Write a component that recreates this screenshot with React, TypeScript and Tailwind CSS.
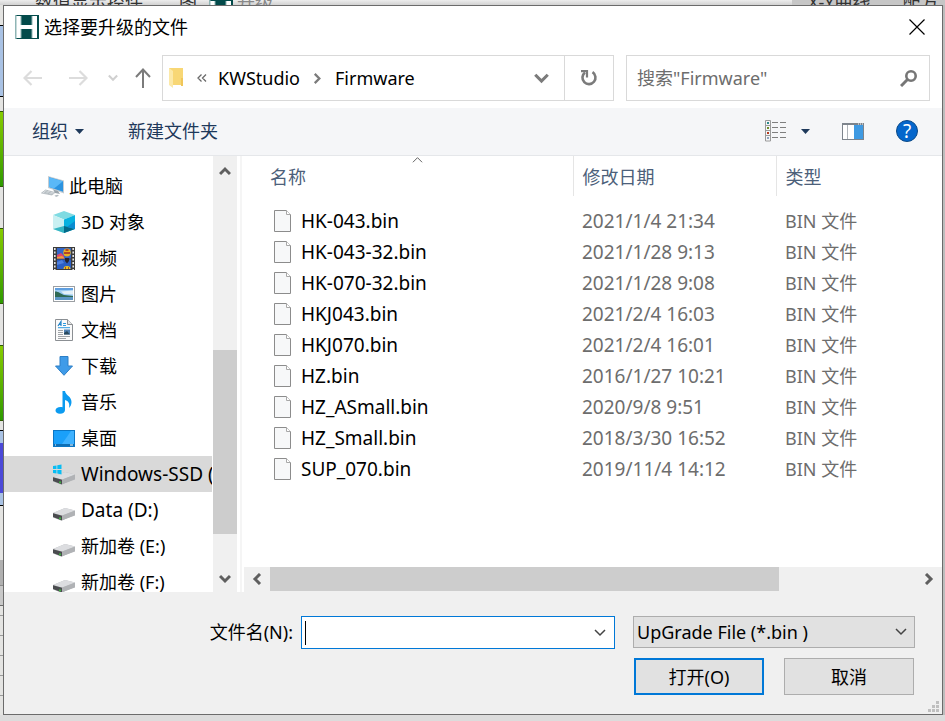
import { useState } from 'react'
import type { ReactNode } from 'react'

interface FileRow {
  name: string
  modified: string
  type: string
}

interface Place {
  label: string
  icon: ReactNode
  root?: boolean
}

const files: FileRow[] = [
  { name: 'HK-043.bin', modified: '2021/1/4 21:34', type: 'BIN 文件' },
  { name: 'HK-043-32.bin', modified: '2021/1/28 9:13', type: 'BIN 文件' },
  { name: 'HK-070-32.bin', modified: '2021/1/28 9:08', type: 'BIN 文件' },
  { name: 'HKJ043.bin', modified: '2021/2/4 16:03', type: 'BIN 文件' },
  { name: 'HKJ070.bin', modified: '2021/2/4 16:01', type: 'BIN 文件' },
  { name: 'HZ.bin', modified: '2016/1/27 10:21', type: 'BIN 文件' },
  { name: 'HZ_ASmall.bin', modified: '2020/9/8 9:51', type: 'BIN 文件' },
  { name: 'HZ_Small.bin', modified: '2018/3/30 16:52', type: 'BIN 文件' },
  { name: 'SUP_070.bin', modified: '2019/11/4 14:12', type: 'BIN 文件' },
]

function Logo() {
  return (
    <svg width="24" height="24" viewBox="0 0 24 24" className="shrink-0">
      <rect width="24" height="24" fill="#034b4b" />
      <path d="M1 1h5v9h11V1h5v22h-5v-9H6v9H1z" fill="#fff" />
      <path d="M0 0h1.5v24H0z" fill="#8fb5b5" />
      <path d="M6 1v9M6 14v9M17 1v9M17 14v9" stroke="#8fb5b5" strokeWidth="1" />
    </svg>
  )
}

function Chevron({ dir, size = 12, width = 3, color = '#5f5f5f' }: { dir: 'up' | 'down' | 'left' | 'right'; size?: number; width?: number; color?: string }) {
  const paths = {
    up: 'M1 9l5-5 5 5',
    down: 'M1 3l5 5 5-5',
    left: 'M9 1L4 6l5 5',
    right: 'M3 1l5 5-5 5',
  }
  return (
    <svg width={size} height={size} viewBox="0 0 12 12" fill="none" stroke={color} strokeWidth={width} className="shrink-0">
      <path d={paths[dir]} />
    </svg>
  )
}

function Caret() {
  return (
    <svg width="9" height="5" viewBox="0 0 9 5" className="shrink-0">
      <path d="M0 0h9L4.500 5z" fill="#1e395b" />
    </svg>
  )
}

function PcIcon() {
  return (
    <svg width="24" height="24" viewBox="0 0 24 24" className="shrink-0">
      <path d="M7 2l16 4.500v13L7 14z" fill="#c4ccd2" />
      <path d="M8 3.200l14 4v10.500L8 13z" fill="#2b93e0" />
      <path d="M8 3.200l14 4L13 14.500 8 13z" fill="#5ab8f7" />
      <path d="M12 15.500l5 1.500 2 3-5-1z" fill="#9aa4ab" />
      <path d="M4.500 16l9.500 2.500-3 2.500-10.500-2z" fill="#dfe3e6" stroke="#a5adb3" strokeWidth=".7" />
      <path d="M4 17.500l8 2M3 18.500l8 2M7 16.500l-3 2.500M10 17.500l-3 2.500" stroke="#a9b1b7" strokeWidth=".6" />
      <path d="M13.500 21.500l3-.8 1.500 1-3 1.200z" fill="#b5bdc2" />
    </svg>
  )
}

function CubeIcon() {
  return (
    <svg width="22" height="22" viewBox="0 0 22 22" className="shrink-0">
      <path d="M11 0l11 4-11 4.500L0 4z" fill="#7fdbe2" />
      <path d="M0 4l11 4.500V22L0 18z" fill="#c9f0f2" />
      <path d="M22 4L11 8.500V22l11-4z" fill="#07b2e0" />
      <path d="M11 15l11 3-11 4z" fill="#046a88" />
      <path d="M11 15L0 18l11 4z" fill="#35b6c4" />
      <path d="M22 10v8l-8-2z" fill="#0a8cd0" />
    </svg>
  )
}

function VideoIcon() {
  return (
    <svg width="22" height="23" viewBox="0 0 22 23" className="shrink-0">
      <rect width="22" height="23" fill="#3c3c3c" />
      <rect x="4" y="1" width="14" height="10.500" fill="#3567c8" />
      <rect x="4" y="12.500" width="14" height="9.500" fill="#2b5fc4" />
      <path d="M4 8l4-2 3 3v2.500H4z" fill="#e2456a" />
      <path d="M4 10l5-1 3 2.500H4z" fill="#f0a03a" />
      <ellipse cx="14" cy="5.500" rx="3.700" ry="4" fill="#e9b21f" />
      <path d="M11 6h6M12.500 3h3" stroke="#a2242b" strokeWidth="1.400" />
      <path d="M12 11h4v3l-2 2.500-2-2.500z" fill="#28242c" />
      <path d="M10.500 22a3.500 3 0 017 0z" fill="#e9c41f" />
      <path d="M12 21h1M15 21h1" stroke="#a2242b" strokeWidth="1.400" />
      <path d="M4 15l5-2 2 3-7 2z" fill="#4f80dd" />
      <path d="M1.800 1v22M20.200 1v22" stroke="#e6e6e6" strokeWidth="1.600" strokeDasharray="2 1.500" />
    </svg>
  )
}

function PictureIcon() {
  return (
    <svg width="22" height="16" viewBox="0 0 22 16" className="shrink-0">
      <rect x=".5" y=".5" width="21" height="15" fill="#fff" stroke="#9b9fa3" />
      <rect x="2" y="2" width="18" height="12" fill="#9ccbf3" />
      <path d="M2 2h18v2H2z" fill="#5f9fe0" />
      <path d="M8 5.500l12-1v4l-9-.5z" fill="#e3f0f8" />
      <path d="M2 5.500c4 0 6 2.500 9 3.500l9 1v1.500H2z" fill="#2f6a54" />
      <path d="M2 11h18v3H2z" fill="#5b95c4" />
    </svg>
  )
}

function DocIcon() {
  return (
    <svg width="18" height="22" viewBox="0 0 18 22" className="shrink-0">
      <path d="M.5.5h12l5 5v16H.5z" fill="#fafafa" stroke="#8b8f93" />
      <path d="M12.500.5v5h5" fill="#e6e6e6" stroke="#8b8f93" />
      <path d="M3 7l3-4.500V7M4 5.500h2" stroke="#1f83c9" strokeWidth="1.200" fill="none" />
      <path d="M8 4.500h3M8 6.500h3M3 8.700h12" stroke="#2d9be0" />
      <path d="M3 11.500h5M3 13.500h5M3 15.500h5M3 17.500h12M3 19.500h8" stroke="#a0a4a8" />
      <rect x="9" y="10.500" width="6" height="5" fill="#4f7fb0" />
      <path d="M9 14l3-2 3 3.500H9z" fill="#28485c" />
    </svg>
  )
}

function DownloadIcon() {
  return (
    <svg width="18" height="20" viewBox="0 0 18 20" className="shrink-0">
      <path d="M5 .5h8V10h4.500L9 19.300.5 10H5z" fill="#3f9be8" stroke="#2d7fc6" />
    </svg>
  )
}

function MusicIcon() {
  return (
    <svg width="18" height="23" viewBox="0 0 18 23" className="shrink-0">
      <path d="M7.500 0h2.500c.5 4.500 6.500 5 6.500 11 0 2.500-1 4.500-2.500 6 1-4.500-.5-7-4-8v10c0 2.200-2 3.700-5 3.700-2.800 0-4.500-1.200-4.500-3.200 0-2.500 3.500-4.200 7-3.200z" fill="#0c9bf0" />
    </svg>
  )
}

function DesktopIcon() {
  return (
    <svg width="22" height="17" viewBox="0 0 22 17" className="shrink-0">
      <rect x=".5" y=".5" width="21" height="16" fill="#1aa0fa" stroke="#0b76c4" />
      <path d="M21 1v13L9 14 18 1z" fill="#3fb2ff" />
      <path d="M1 15h20" stroke="#0c5f9c" strokeWidth="1.500" />
      <path d="M2 15h1M17 15h3" stroke="#fff" />
    </svg>
  )
}

function DriveIcon({ system = false }: { system?: boolean }) {
  return (
    <svg width="23" height="22" viewBox="0 0 23 22" className="shrink-0">
      <path d="M0 14L12 9l10 2.500v5l-14 5-8-3z" fill="#b5b7ba" />
      <path d="M0 14L12 9l10 2.500L9 16.500z" fill="#dcdde0" />
      <path d="M0 14.300L9 16.800V21.500L0 18z" fill="#4a4c4f" />
      <path d="M9 16.800l13-5v4.300L9 21.500z" fill="#b0b2b5" />
      <path d="M7 18.500v1.700" stroke="#3ad53a" strokeWidth="1.500" />
      {system && <path d="M0 3l3.500-.6V6H0zM4.300 2.300L8.500 1.500V6H4.300zM0 6.900h3.500v3.600L0 9.900zM4.300 6.900h4.200v4.500l-4.200-.8z" fill="#08bdf4" />}
    </svg>
  )
}

function FileIcon() {
  return (
    <svg width="18" height="22" viewBox="0 0 18 22" className="shrink-0">
      <path d="M.5.5h12l4 4v17H.5z" fill="#f7f8f9" stroke="#8c8c8c" />
      <path d="M12.500.5v4h4" fill="#fff" stroke="#a8a8a8" />
    </svg>
  )
}

const places: Place[] = [
  { label: '此电脑', icon: <PcIcon />, root: true },
  { label: '3D 对象', icon: <CubeIcon /> },
  { label: '视频', icon: <VideoIcon /> },
  { label: '图片', icon: <PictureIcon /> },
  { label: '文档', icon: <DocIcon /> },
  { label: '下载', icon: <DownloadIcon /> },
  { label: '音乐', icon: <MusicIcon /> },
  { label: '桌面', icon: <DesktopIcon /> },
  { label: 'Windows-SSD (C:)', icon: <DriveIcon system /> },
  { label: 'Data (D:)', icon: <DriveIcon /> },
  { label: '新加卷 (E:)', icon: <DriveIcon /> },
  { label: '新加卷 (F:)', icon: <DriveIcon /> },
]

// Edge of the application window behind the dialog
function BackdropLeft() {
  return (
    <div className="w-[3px] shrink-0 flex flex-col bg-[#e4e4e2]">
      <div className="h-5" />
      <div className="h-[72px] bg-[#a9c2e4] border-y border-black" />
      <div className="h-[14px]" />
      <div className="h-[76px] bg-linear-to-b from-[#86cc00] to-[#2c9a00] border-y border-[#2d5a00]" />
      <div className="h-[41px]" />
      <div className="h-[76px] bg-linear-to-b from-[#86cc00] to-[#2c9a00] border-y border-[#2d5a00]" />
      <div className="h-[41px]" />
      <div className="h-[76px] bg-linear-to-b from-[#86cc00] to-[#2c9a00] border-y border-[#2d5a00]" />
      <div className="h-[9px]" />
      <div className="h-[76px] bg-[#a9c2e4] border-y border-black py-3">
        <div className="h-full bg-[#4b49d8]" />
      </div>
      <div className="h-[54px]" />
      <div className="h-[26px] bg-[#b0b0b0] border-b border-[#8a8a8a]" />
      <div className="h-[20px] bg-[#c8c8c8] border-b border-[#6a6a6a]" />
      <div className="h-[10px] border-b border-[#9a9a9a]" />
      <div className="h-[20px] border-b border-[#9a9a9a]" />
      <div className="h-[20px] border-b border-[#9a9a9a]" />
      <div className="h-[20px] border-b border-[#9a9a9a]" />
      <div className="h-[20px] border-b border-[#9a9a9a]" />
    </div>
  )
}

function BackdropTop() {
  return (
    <div className="h-[5px] shrink-0 flex items-center overflow-hidden bg-linear-to-b from-[#ededed] to-[#d2d2d2] text-[18px] leading-[5px] text-[#333] whitespace-nowrap">
      <span className="ml-[35px]">数值显示控件</span>
      <span className="ml-[36px]">图</span>
      <span className="ml-3 h-full flex items-start"><Logo /></span>
      <span className="ml-1 text-[#888]">升级</span>
      <span className="ml-auto w-[153px] h-full flex items-center bg-[#c6c6c6]">
        <span className="ml-4">X-Y曲线</span>
        <span className="ml-8">配方</span>
      </span>
    </div>
  )
}

export default function App() {
  const [selected, setSelected] = useState('Windows-SSD (C:)')
  const [fileName, setFileName] = useState('')
  const [query, setQuery] = useState('')

  return (
    <div className="h-screen flex flex-col overflow-hidden bg-[#dcdcdc] text-black text-[18px] leading-6 font-['Noto_Sans','Noto_Sans_CJK_SC',sans-serif]">
      <BackdropTop />
      <div className="flex-1 min-h-0 flex pb-[6px]">
        <BackdropLeft />

        <main className="flex-1 min-w-0 flex flex-col bg-white border border-[#6b6b6b]">
          {/* Title bar */}
          <header className="h-[42px] shrink-0 flex items-center pl-[11px] pr-[17px]">
            <Logo />
            <h1 className="ml-[5px] flex-1">选择要升级的文件</h1>
            <button aria-label="关闭">
              <svg width="16" height="16" viewBox="0 0 16 16" stroke="#000" strokeWidth="1.200">
                <path d="M.5.5l15 15M15.500.5l-15 15" />
              </svg>
            </button>
          </header>

          {/* Navigation */}
          <div className="shrink-0 flex items-center pl-[19px] pr-3 py-[7px]">
            <button aria-label="后退" className="mr-[27px]">
              <svg width="19" height="16" viewBox="0 0 19 16" fill="none" stroke="#dcdcdc" strokeWidth="2.200">
                <path d="M19 8H1.500M8.500 1l-7 7 7 7" />
              </svg>
            </button>
            <button aria-label="前进" className="mr-5">
              <svg width="19" height="16" viewBox="0 0 19 16" fill="none" stroke="#dcdcdc" strokeWidth="2.200">
                <path d="M0 8h17.500M10.500 1l7 7-7 7" />
              </svg>
            </button>
            <button aria-label="最近浏览的位置" className="mr-[17px]">
              <Chevron dir="down" size={10} width={2.5} color="#d0d0d0" />
            </button>
            <button aria-label="上移" className="mr-[11px]">
              <svg width="16" height="20" viewBox="0 0 16 20" fill="none" stroke="#7b7b7b" strokeWidth="2">
                <path d="M8 20V1.500M1 9l7-7.500L15 9" />
              </svg>
            </button>

            <div className="flex-1 min-w-0 h-[46px] flex items-center border border-[#d9d9d9] pl-[6px]">
              <svg width="14" height="22" viewBox="0 0 14 22" className="shrink-0">
                <path d="M0 1h14v17H4z" fill="#f8d775" />
                <path d="M0 1l4 3v17l-4-3z" fill="#fce9a8" />
                <path d="M12 11h2v8h-2z" fill="#f0c65a" />
              </svg>
              <svg width="10" height="8" viewBox="0 0 10 8" fill="none" stroke="#6a6a6a" strokeWidth="1.300" className="shrink-0 ml-[14px]">
                <path d="M4.500.5L1 4l3.500 3.500M9 .5L5.500 4 9 7.500" />
              </svg>
              <button className="ml-[11px]">KWStudio</button>
              <span className="mx-3"><Chevron dir="right" size={11} width={2.5} color="#7b7b7b" /></span>
              <button className="flex-1 text-left">Firmware</button>
              <button aria-label="以前的位置" className="px-[15px]">
                <Chevron dir="down" size={15} width={2.5} color="#7b7b7b" />
              </button>
              <button aria-label="刷新" className="w-[49px] h-full flex items-center justify-center border-l border-[#d9d9d9]">
                <svg width="18" height="18" viewBox="0 0 18 18" fill="none" stroke="#7b7b7b" strokeWidth="2.600">
                  <path d="M12.500 3.200a6.500 6.500 0 11-7.500.3" />
                  <path d="M1 2.200h6V8.500" strokeWidth="2.200" />
                </svg>
              </button>
            </div>

            <label className="ml-3 w-[304px] h-[46px] flex items-center border border-[#d9d9d9] pl-[10px] pr-3">
              <input
                type="search"
                aria-label="搜索"
                value={query}
                onChange={(e) => setQuery(e.target.value)}
                placeholder={'搜索"Firmware"'}
                className="flex-1 min-w-0 outline-none placeholder:text-[#6d6d6d]"
              />
              <svg width="17" height="17" viewBox="0 0 17 17" fill="none" stroke="#767676" className="shrink-0">
                <circle cx="11" cy="6" r="4.700" strokeWidth="2.600" />
                <path d="M7.500 9.500L1 16" strokeWidth="3" />
              </svg>
            </label>
          </div>

          {/* Toolbar */}
          <div className="h-[48px] shrink-0 flex items-center pl-7 pr-6 pb-px bg-[#f5f6f8] border-b border-[#e5e7ea] text-[#1e395b]">
            <button className="flex items-center gap-[7px]">组织<Caret /></button>
            <button className="ml-11">新建文件夹</button>
            <div className="ml-auto flex items-center gap-8">
              <button aria-label="更改视图" className="flex items-center gap-[14px]">
                <svg width="22" height="22" viewBox="0 0 22 22" fill="none">
                  <path d="M.5.5h5v20.500h-5zM.5 5.500h5M.5 10.500h5M.5 15.500h5" stroke="#9a9a9a" />
                  <path d="M2 3h2" stroke="#2b8a8a" strokeWidth="2" />
                  <path d="M2 8h2" stroke="#6f8f2a" strokeWidth="2" />
                  <path d="M2 13h2" stroke="#b53a1e" strokeWidth="2" />
                  <path d="M2 18h2" stroke="#8fa4bd" strokeWidth="2" />
                  <path d="M7 2.500h6M15 2.500h6M7 7.500h6M15 7.500h6M7 12.500h6M15 12.500h6M7 17.500h6M15 17.500h6" stroke="#7f7f7f" />
                </svg>
                <Caret />
              </button>
              <button aria-label="预览窗格">
                <svg width="22" height="17" viewBox="0 0 22 17">
                  <rect x=".5" y=".5" width="21" height="16" fill="#fff" stroke="#7d848c" />
                  <path d="M0 0h22v2H0z" fill="#7d848c" />
                  <path d="M16 1h1M18 1h1M20 1h1" stroke="#fff" />
                  <path d="M5.500 2v14" stroke="#b0b5ba" />
                  <rect x="12" y="2" width="9" height="14" fill="#3f9ae2" />
                </svg>
              </button>
              <button aria-label="帮助" className="w-[22px] h-[22px] rounded-full bg-[#0567cc] border border-[#0b4a88] text-white text-[19px] leading-5">?</button>
            </div>
          </div>

          <div className="flex-1 min-h-0 flex">
            {/* Places */}
            <nav className="w-[208px] shrink-0 pt-3 overflow-hidden">
              {places.map((p) => (
                <button
                  key={p.label}
                  onClick={() => setSelected(p.label)}
                  className={`w-full h-9 flex items-center whitespace-nowrap overflow-hidden ${p.root ? 'pl-[37px] gap-1' : 'pl-[48px] gap-[5px]'} ${selected === p.label ? 'bg-[#d9d9d9]' : ''}`}
                >
                  <span className="w-6 shrink-0 flex justify-center">{p.icon}</span>
                  <span className={/^[A-Z]/.test(p.label) ? 'text-[19px]' : ''}>{p.label}</span>
                </button>
              ))}
            </nav>
            <div className="w-6 ml-px shrink-0 flex flex-col items-center bg-[#f0f0f0]">
              <button aria-label="向上滚动" className="h-[30px]"><Chevron dir="up" /></button>
              <div className="flex-[164]" />
              <div className="flex-[184] w-full bg-[#cdcdcd]" />
              <div className="flex-[32]" />
              <button aria-label="向下滚动" className="h-[26px]"><Chevron dir="down" /></button>
            </div>
            <div className="w-[5px] shrink-0 border-r-2 border-[#f5f5f5]" />

            {/* File list */}
            <section className="flex-1 min-w-0 flex flex-col">
              <div className="flex-1 min-h-0 overflow-hidden">
                <table className="w-full table-fixed text-left">
                  <colgroup>
                    <col className="w-[331px]" />
                    <col className="w-[203px]" />
                    <col />
                  </colgroup>
                  <thead className="text-[#4c607a]">
                    <tr className="h-10">
                      <th className="relative p-0 pt-[2px] pl-7 font-normal border-r border-[#e5e5e5]">
                        名称
                        <span className="absolute -top-0.5 left-[170px]"><Chevron dir="up" size={11} width={1} color="#555" /></span>
                      </th>
                      <th className="p-0 pt-[2px] pl-[9px] font-normal border-r border-[#e5e5e5]">修改日期</th>
                      <th className="p-0 pt-[2px] pl-[9px] font-normal">类型</th>
                    </tr>
                  </thead>
                  <tbody className="before:block before:h-[9px] text-[#6d6d6d]">
                    {files.map((f) => (
                      <tr key={f.name} className="h-[31px]">
                        <td className="p-0 pl-8 text-black text-[19px]">
                          <div className="flex items-center gap-[9px]">
                            <FileIcon />
                            {f.name}
                          </div>
                        </td>
                        <td className="p-0 pl-[9px] text-[19px]">{f.modified}</td>
                        <td className="p-0 pl-[9px]">{f.type}</td>
                      </tr>
                    ))}
                  </tbody>
                </table>
              </div>
              <div className="h-[25px] ml-[2px] shrink-0 flex items-center bg-[#f0f0f0] pb-px">
                <button aria-label="向左滚动" className="w-[26px] flex justify-center"><Chevron dir="left" /></button>
                <div className="flex-[509] h-full bg-[#cdcdcd]" />
                <div className="flex-[136]" />
                <button aria-label="向右滚动" className="w-[27px] flex justify-center"><Chevron dir="right" /></button>
              </div>
            </section>
          </div>

          {/* File name and actions */}
          <footer className="relative shrink-0 bg-[#f0f0f0] pt-6 pb-[19px] pr-[27px]">
            <div className="flex items-start">
              <label htmlFor="file-name" className="w-[289px] text-right leading-8">文件名(N):</label>
              <div className="ml-2 flex-1 h-[33px] flex items-center bg-white border border-[#0078d7] pl-[3px] pr-2">
                <span className="w-px h-6 bg-black" />
                <input
                  id="file-name"
                  value={fileName}
                  onChange={(e) => setFileName(e.target.value)}
                  className="flex-1 min-w-0 outline-none"
                />
                <button aria-label="文件名列表"><Chevron dir="down" width={1.5} color="#444" /></button>
              </div>
              <div className="ml-[18px] w-[282px] relative">
                <select aria-label="文件类型" className="w-full h-[32px] appearance-none bg-[#e1e1e1] border border-[#adadad] pl-[3px]">
                  <option>UpGrade File (*.bin )</option>
                </select>
                <span className="absolute right-2 inset-y-0 flex items-center pointer-events-none"><Chevron dir="down" width={1.5} color="#444" /></span>
              </div>
            </div>
            <div className="mt-[9px] flex justify-end gap-5">
              <button className="w-[130px] h-[37px] bg-[#e1e1e1] border-2 border-[#0078d7]">打开(O)</button>
              <button className="w-[130px] h-[37px] mr-px bg-[#e1e1e1] border border-[#adadad]">取消</button>
            </div>
            <svg width="11" height="11" viewBox="0 0 11 11" fill="#bfbfbf" className="absolute right-[3px] bottom-[2px]">
              <path d="M8 0h3v3H8zM4 4h3v3H4zM8 4h3v3H8zM0 8h3v3H0zM4 8h3v3H4zM8 8h3v3H8z" />
            </svg>
          </footer>
        </main>

        <div className="w-[2px] shrink-0 bg-[#bdbdbd]" />
      </div>
    </div>
  )
}
